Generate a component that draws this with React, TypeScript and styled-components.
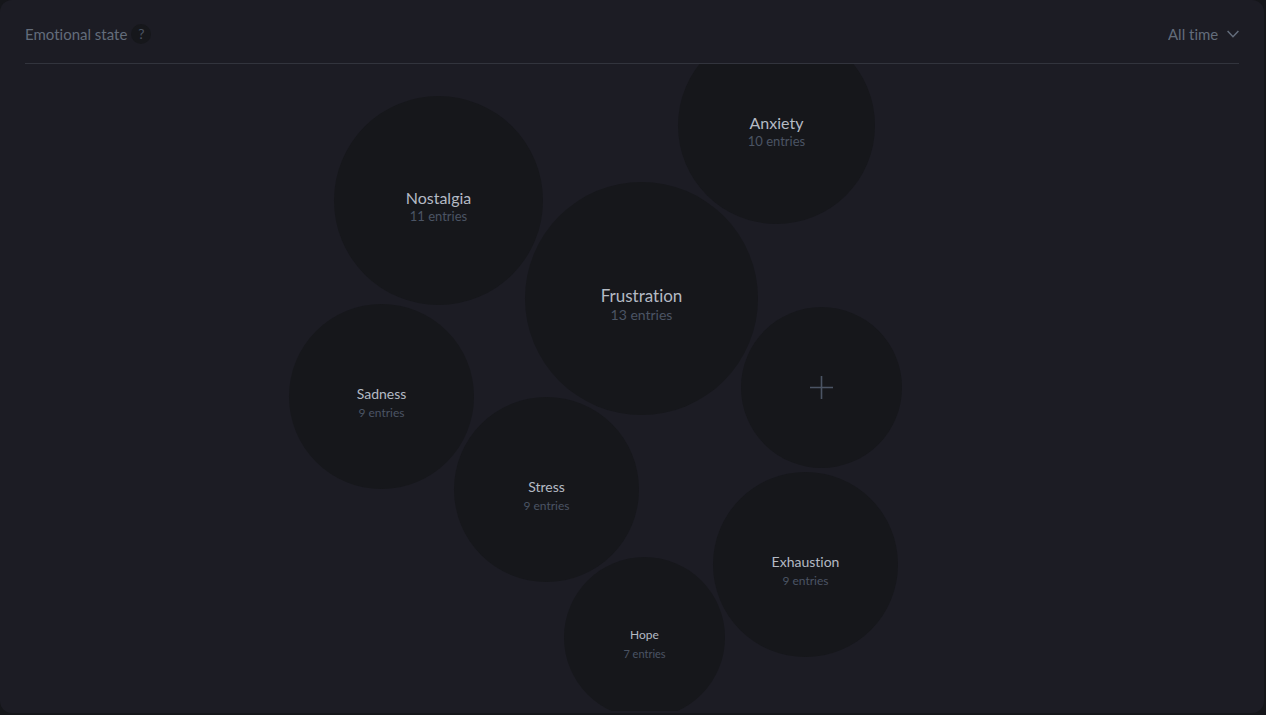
import React from "react";
import styled, { createGlobalStyle } from "styled-components";

const GlobalStyle = createGlobalStyle`
  *, *::before, *::after { box-sizing: border-box; }
  body {
    margin: 0;
    background: #15161a;
    font-family: Lato, "Liberation Sans", sans-serif;
    font-variant-ligatures: none;
  }
  button, select { font-family: inherit; font-variant-ligatures: inherit; }
`;

const Page = styled.main`
  display: flex;
  min-height: 100vh;
  padding: 0 2px 2px 0;
`;

const Card = styled.section`
  flex: 1;
  display: flex;
  flex-direction: column;
  padding: 0 25px 2px;
  border-radius: 12px;
  background: #1c1c24;
`;

const Header = styled.header`
  display: flex;
  align-items: center;
  justify-content: space-between;
  height: 64px;
  padding-top: 5px;
  border-bottom: 1px solid #32343d;
`;

const TitleGroup = styled.div`
  display: flex;
  align-items: center;
  gap: 4px;
`;

const Title = styled.h1`
  margin: 0;
  font-size: 15px;
  line-height: 20px;
  font-weight: 400;
  color: #636c7b;
`;

const HelpButton = styled.button`
  width: 20px;
  height: 20px;
  padding: 0;
  border: 0;
  border-radius: 50%;
  background: #16171b;
  color: #4b5464;
  font-size: 14px;
  line-height: 18px;
`;

const RangePicker = styled.label`
  display: grid;
  align-items: center;
  color: #636c7b;

  > * { grid-area: 1 / 1; }
`;

const RangeSelect = styled.select`
  appearance: none;
  padding: 0 20px 0 0;
  border: 0;
  background: transparent;
  color: inherit;
  font-size: 15px;
  line-height: 20px;
`;

const Chevron = styled.svg`
  justify-self: end;
  pointer-events: none;
`;

const BubbleCanvas = styled.div`
  position: relative;
  flex: 1;
  min-height: 647px;
  overflow: hidden;
`;

const Bubble = styled.button<{ $x: number; $y: number; $size: number }>`
  position: absolute;
  left: calc(50% + ${(p) => p.$x}px);
  top: ${(p) => p.$y}px;
  width: ${(p) => p.$size}px;
  height: ${(p) => p.$size}px;
  display: flex;
  flex-direction: column;
  align-items: center;
  justify-content: center;
  padding: 0;
  border: 0;
  border-radius: 50%;
  background: #16171b;
  color: #4b5464;
`;

const Name = styled.span<{ $size: number }>`
  padding-top: 11px;
  font-size: ${(p) => p.$size}px;
  line-height: 20px;
  color: #b4bac4;
`;

const Entries = styled.span<{ $size: number }>`
  font-size: ${(p) => p.$size}px;
  line-height: 17px;
`;

const PlusIcon = styled.svg`
  display: block;
`;

type Emotion = {
  name: string;
  entries: number;
  x: number;
  y: number;
  size: number;
  nameSize: number;
  entriesSize: number;
};

const emotions: Emotion[] = [
  { name: "Nostalgia", entries: 11, x: -298, y: 32, size: 209, nameSize: 16, entriesSize: 13 },
  { name: "Anxiety", entries: 10, x: 46, y: -37, size: 197, nameSize: 16, entriesSize: 13 },
  { name: "Frustration", entries: 13, x: -107, y: 118, size: 233, nameSize: 17, entriesSize: 14 },
  { name: "Sadness", entries: 9, x: -343, y: 240, size: 185, nameSize: 14, entriesSize: 12 },
  { name: "Stress", entries: 9, x: -178, y: 333, size: 185, nameSize: 14, entriesSize: 12 },
  { name: "Exhaustion", entries: 9, x: 81, y: 408, size: 185, nameSize: 14, entriesSize: 12 },
  { name: "Hope", entries: 7, x: -68, y: 493, size: 161, nameSize: 12, entriesSize: 11 },
];

export default function App() {
  return (
    <>
      <GlobalStyle />
      <Page>
        <Card>
          <Header>
            <TitleGroup>
              <Title>Emotional state</Title>
              <HelpButton type="button">?</HelpButton>
            </TitleGroup>
            <RangePicker>
              <RangeSelect aria-label="Time range">
                <option>All time</option>
              </RangeSelect>
              <Chevron width="12" height="8" viewBox="0 0 12 8" fill="none" stroke="currentColor" strokeWidth="1.5" aria-hidden="true">
                <path d="M0.6 0.9 6 6.7 11.4 0.9" />
              </Chevron>
            </RangePicker>
          </Header>
          <BubbleCanvas>
            {emotions.map((e) => (
              <Bubble key={e.name} type="button" $x={e.x} $y={e.y} $size={e.size}>
                <Name $size={e.nameSize}>{e.name}</Name>
                <Entries $size={e.entriesSize}>{e.entries} entries</Entries>
              </Bubble>
            ))}
            <Bubble type="button" aria-label="Add emotion" $x={109} $y={243} $size={161}>
              <PlusIcon width="23" height="23" viewBox="0 0 23 23" stroke="currentColor" strokeWidth="1.6" aria-hidden="true">
                <path d="M11.5 0V23M0 11.5H23" />
              </PlusIcon>
            </Bubble>
          </BubbleCanvas>
        </Card>
      </Page>
    </>
  );
}
